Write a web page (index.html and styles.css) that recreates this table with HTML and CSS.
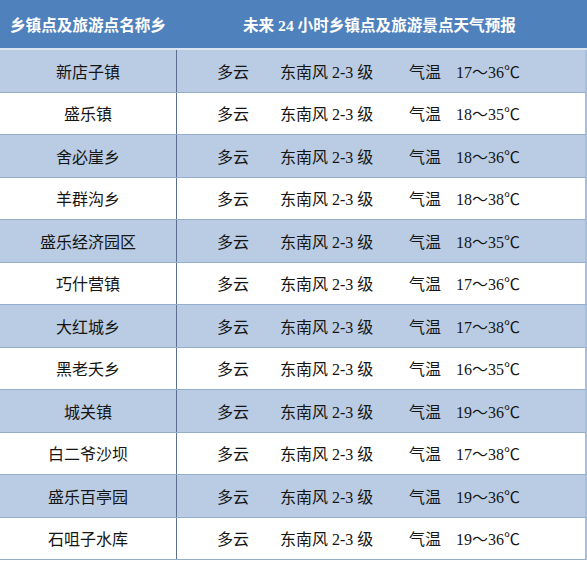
FILE: index.html
```html
<!DOCTYPE html>
<html lang="zh-CN">
<head>
<meta charset="utf-8">
<title>天气预报</title>
<link rel="stylesheet" href="styles.css">
</head>
<body>
<div class="table">
  <div class="head">
    <div class="h1">乡镇点及旅游点名称乡</div>
    <div class="h2">未来 24 小时乡镇点及旅游景点天气预报</div>
  </div>
  <div class="row alt"><div class="name">新店子镇</div><div class="info"><span>多云</span><span>东南风 2-3 级</span><span>气温</span><span>17～36℃</span></div></div>
  <div class="row"><div class="name">盛乐镇</div><div class="info"><span>多云</span><span>东南风 2-3 级</span><span>气温</span><span>18～35℃</span></div></div>
  <div class="row alt"><div class="name">舍必崖乡</div><div class="info"><span>多云</span><span>东南风 2-3 级</span><span>气温</span><span>18～36℃</span></div></div>
  <div class="row"><div class="name">羊群沟乡</div><div class="info"><span>多云</span><span>东南风 2-3 级</span><span>气温</span><span>18～38℃</span></div></div>
  <div class="row alt"><div class="name">盛乐经济园区</div><div class="info"><span>多云</span><span>东南风 2-3 级</span><span>气温</span><span>18～35℃</span></div></div>
  <div class="row"><div class="name">巧什营镇</div><div class="info"><span>多云</span><span>东南风 2-3 级</span><span>气温</span><span>17～36℃</span></div></div>
  <div class="row alt"><div class="name">大红城乡</div><div class="info"><span>多云</span><span>东南风 2-3 级</span><span>气温</span><span>17～38℃</span></div></div>
  <div class="row"><div class="name">黑老夭乡</div><div class="info"><span>多云</span><span>东南风 2-3 级</span><span>气温</span><span>16～35℃</span></div></div>
  <div class="row alt"><div class="name">城关镇</div><div class="info"><span>多云</span><span>东南风 2-3 级</span><span>气温</span><span>19～36℃</span></div></div>
  <div class="row"><div class="name">白二爷沙坝</div><div class="info"><span>多云</span><span>东南风 2-3 级</span><span>气温</span><span>17～38℃</span></div></div>
  <div class="row alt"><div class="name">盛乐百亭园</div><div class="info"><span>多云</span><span>东南风 2-3 级</span><span>气温</span><span>19～36℃</span></div></div>
  <div class="row"><div class="name">石咀子水库</div><div class="info"><span>多云</span><span>东南风 2-3 级</span><span>气温</span><span>19～36℃</span></div></div>
</div>
</body>
</html>
```

FILE: styles.css
```css
html, body {
  margin: 0;
  padding: 0;
  background: #ffffff;
}
.table {
  width: 587px;
  height: 561px;
  overflow: hidden;
  font-family: "Liberation Serif", "Noto Sans CJK SC", serif;
  font-size: 16px;
  color: #151515;
}
.head {
  height: 48px;
  background: #4f81bd;
  border-bottom: 2px solid #dbe5f1;
  display: grid;
  grid-template-columns: 243px 1fr;
  align-items: center;
  color: #ffffff;
  font-weight: bold;
  font-family: "Liberation Serif", "Noto Sans CJK SC", serif;
  font-size: 15.6px;
}
.h1 {
  padding-left: 10px;
}
.row {
  height: 42.5px;
  box-sizing: border-box;
  border-bottom: 1px solid #95aecb;
  border-right: 2px solid #a9bedb;
  display: grid;
  grid-template-columns: 177px 1fr;
  background: #ffffff;
}
.row.alt {
  background: #b9cce4;
}
.name {
  border-right: 1px solid #5b6f8e;
  display: flex;
  align-items: center;
  justify-content: center;
}
.info {
  display: grid;
  grid-template-columns: 63px 129px 47px auto;
  padding-left: 40px;
  align-items: center;
}
```
